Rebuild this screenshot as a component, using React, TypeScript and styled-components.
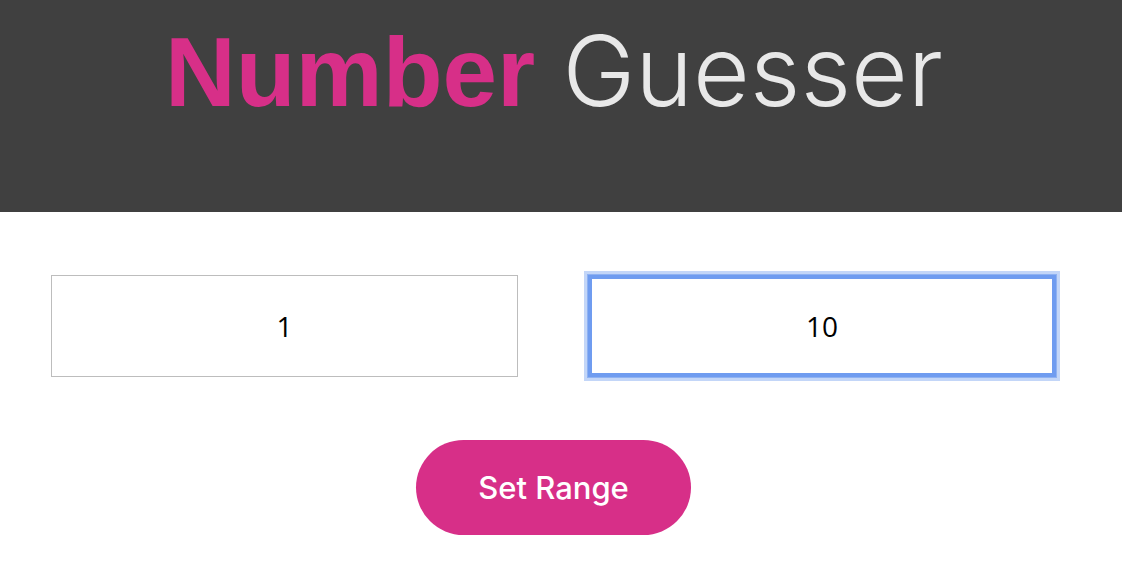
import React from "react";
import styled, { createGlobalStyle } from "styled-components";

const GlobalStyle = createGlobalStyle`
  html, body { margin: 0; padding: 0; background: #ffffff; }
  body { font-family: "Inter", "Liberation Sans", sans-serif; }
  * { box-sizing: border-box; }
`;

const Header = styled.header`
  height: 212px;
  background: #404040;
  display: flex;
  justify-content: center;
  padding-top: 12px;
  padding-right: 14px;
`;

const Title = styled.h1`
  margin: 0;
  font-size: 98px;
  line-height: 118px;
  font-family: "Liberation Sans", Arial, sans-serif;
  white-space: nowrap;
`;

const Strong = styled.span`
  color: #d72f88;
  font-weight: 700;
`;

const Light = styled.span`
  color: #e8e8e8;
  font-weight: 300;
  font-family: "Inter", "Liberation Sans", sans-serif;
`;

const Main = styled.main`
  display: flex;
  flex-direction: column;
  align-items: center;
  padding-top: 63px;
  padding-right: 15px;
`;

const InputRow = styled.div`
  display: grid;
  grid-template-columns: 467px 468px;
  column-gap: 70px;
  padding-left: 51px;
  align-self: flex-start;
`;

const RangeInput = styled.input<{ $focused?: boolean }>`
  height: 102px;
  width: 100%;
  border: 1px solid ${(p) => (p.$focused ? "#6f9cf0" : "#bdbdbd")};
  background: #fff;
  text-align: center;
  font-family: "Open Sans", "Inter", sans-serif;
  font-size: 28px;
  color: #000;
  outline: none;
  ${(p) =>
    p.$focused &&
    `box-shadow: inset 0 0 0 3px #6f9cf0, 0 0 0 1px #8fb2f2, 0 0 0 4px #c3d6f8;`}
`;

const Button = styled.button`
  margin-top: 63px;
  width: 275px;
  height: 95px;
  border: none;
  border-radius: 48px;
  background: #d72f88;
  color: #fff;
  font-family: "Inter", "Liberation Sans", sans-serif;
  font-size: 31px;
  font-weight: 500;
  cursor: pointer;
`;

export default function App() {
  return (
    <>
      <GlobalStyle />
      <Header>
        <Title>
          <Strong>Number</Strong> <Light>Guesser</Light>
        </Title>
      </Header>
      <Main>
        <InputRow>
          <RangeInput type="text" defaultValue="1" />
          <RangeInput type="text" defaultValue="10" $focused />
        </InputRow>
        <Button>Set Range</Button>
      </Main>
    </>
  );
}
